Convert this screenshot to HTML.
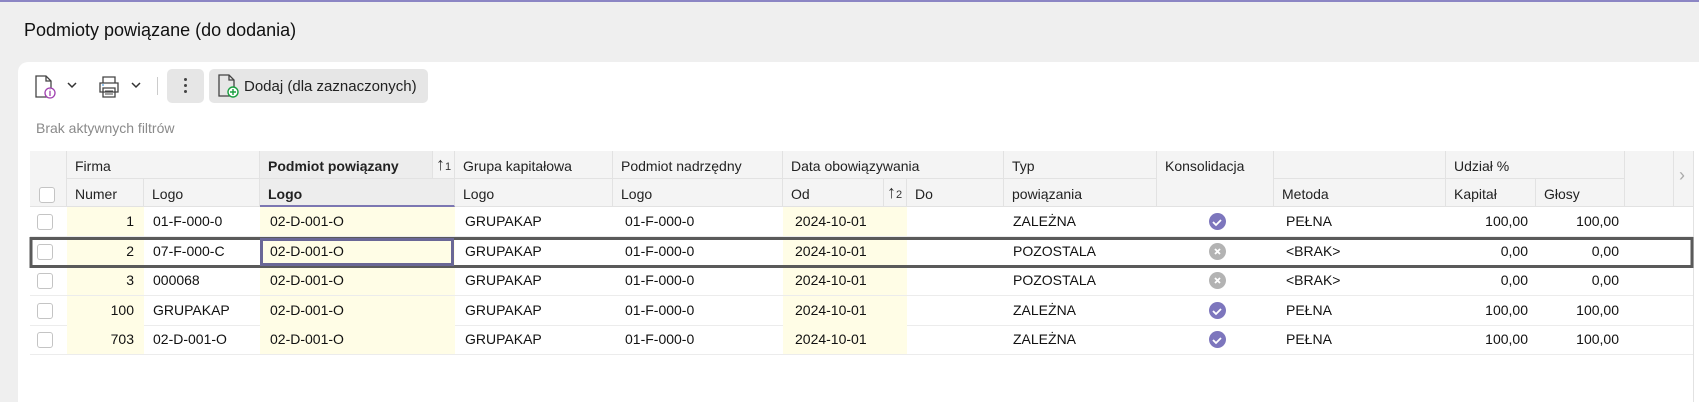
<!DOCTYPE html>
<html><head><meta charset="utf-8"><style>
*{box-sizing:border-box;margin:0;padding:0}
body{width:1699px;height:402px;overflow:hidden;background:#efefef;font-family:"Liberation Sans",Arial,sans-serif;color:#222;position:relative}
.a{position:absolute}
.topline{left:0;top:0;width:1699px;height:2px;background:#8c86c4}
.title{left:24px;top:20px;font-size:18px;color:#111}
.panel{left:18px;top:62px;width:1681px;height:340px;background:#fff;border-top-left-radius:10px}
.btn{background:#e6e6e6;border-radius:5px;top:69px;height:34px}
.filt{left:36px;top:120px;font-size:14px;color:#8a8a8a}
.hd{background:#f4f4f4;border-right:1px solid #e2e2e2;border-bottom:1px solid #e2e2e2;font-size:14px;color:#222;padding:7px 0 0 8px;height:28px}
.b{font-weight:bold}
.row{left:30px;width:1663px;height:30px;border-bottom:1px solid #ececec}
.c{position:absolute;top:0;height:29px;font-size:14px;line-height:29px;color:#111}
.y{background:#fffde6}
.cb{position:absolute;left:7px;top:7px;width:16px;height:16px;border:1px solid #c4c4c4;border-radius:3px;background:#fff}
.ok{position:absolute;left:52px;top:6px;width:17px;height:17px;border-radius:50%;background:#7d76bd}
.no{position:absolute;left:52px;top:6px;width:17px;height:17px;border-radius:50%;background:#b3b3b3}
.r{text-align:right}
.ar{font-size:18px;line-height:18px;padding:4px 0 0 3px;color:#333}
.ar span{font-size:11px}
</style></head><body>
<div class="a topline"></div>
<div class="a title">Podmioty powiązane (do dodania)</div>
<div class="a panel"></div>

<svg class="a" style="left:33px;top:74px" width="26" height="26" viewBox="0 0 26 26"><path d="M3 2h10l5 5v16H3z" fill="none" stroke="#444" stroke-width="1.3"/><path d="M13 2v5h5" fill="none" stroke="#444" stroke-width="1.3"/><circle cx="17" cy="19" r="5" fill="#fff" stroke="#a040b0" stroke-width="1.3"/><path d="M17 17v5M17 15.6v.6" stroke="#a040b0" stroke-width="1.3"/></svg>
<svg class="a" style="left:66px;top:80px" width="12" height="10"><path d="M2 3l4 4 4-4" fill="none" stroke="#333" stroke-width="1.5"/></svg>
<svg class="a" style="left:96px;top:74px" width="26" height="26" viewBox="0 0 26 26"><path d="M7 9V3h12v6M4 9h18v9H4zM7 14h12v9H7z" fill="#fff" stroke="#444" stroke-width="1.3"/><path d="M9 17h8M9 20h8" stroke="#444"/><path d="M6 11h2" stroke="#2a8ad8"/></svg>
<svg class="a" style="left:130px;top:80px" width="12" height="10"><path d="M2 3l4 4 4-4" fill="none" stroke="#333" stroke-width="1.5"/></svg>
<div class="a" style="left:157px;top:77px;width:1px;height:18px;background:#ccc"></div>
<div class="a btn" style="left:167px;width:37px"></div>
<div class="a" style="left:184px;top:78px;width:3px;height:3px;border-radius:50%;background:#444;box-shadow:0 6px 0 #444,0 12px 0 #444"></div>
<div class="a btn" style="left:209px;width:219px"></div>
<svg class="a" style="left:216px;top:73px" width="26" height="26" viewBox="0 0 26 26"><path d="M3 2h10l5 5v16H3z" fill="none" stroke="#444" stroke-width="1.3"/><path d="M13 2v5h5" fill="none" stroke="#444" stroke-width="1.3"/><circle cx="17" cy="19" r="5" fill="#fff" stroke="#1aa040" stroke-width="1.4"/><path d="M17 16v6M14 19h6" stroke="#1aa040" stroke-width="1.4"/></svg>
<div class="a" style="left:244px;top:78px;font-size:15px;color:#222">Dodaj (dla zaznaczonych)</div>
<div class="a filt">Brak aktywnych filtrów</div>

<div class="a" style="left:30px;top:151px;width:1664px;height:56px;background:#f4f4f4;border-top:1px solid #e2e2e2;border-left:1px solid #e2e2e2"></div>
<div class="a hd" style="left:30px;top:151px;width:37px;height:56px"></div>
<div class="cb a" style="left:39px;top:187px;position:absolute"></div>
<div class="a hd" style="left:67px;top:151px;width:193px">Firma</div>
<div class="a hd" style="left:67px;top:179px;width:77px">Numer</div>
<div class="a hd" style="left:144px;top:179px;width:116px">Logo</div>
<div class="a hd b" style="left:260px;top:151px;width:173px;background:#ededed">Podmiot powiązany</div>
<div class="a hd ar" style="left:433px;top:151px;width:22px">↑<span>1</span></div>
<div class="a hd b" style="left:260px;top:179px;width:195px;background:#ededed;border-bottom:2px solid #7c77b2">Logo</div>
<div class="a hd" style="left:455px;top:151px;width:158px">Grupa kapitałowa</div>
<div class="a hd" style="left:455px;top:179px;width:158px">Logo</div>
<div class="a hd" style="left:613px;top:151px;width:170px">Podmiot nadrzędny</div>
<div class="a hd" style="left:613px;top:179px;width:170px">Logo</div>
<div class="a hd" style="left:783px;top:151px;width:221px">Data obowiązywania</div>
<div class="a hd" style="left:783px;top:179px;width:101px">Od</div>
<div class="a hd ar" style="left:884px;top:179px;width:23px">↑<span>2</span></div>
<div class="a hd" style="left:907px;top:179px;width:97px">Do</div>
<div class="a hd" style="left:1004px;top:151px;width:153px">Typ</div>
<div class="a hd" style="left:1004px;top:179px;width:153px">powiązania</div>
<div class="a hd" style="left:1157px;top:151px;width:117px;height:56px">Konsolidacja</div>
<div class="a hd" style="left:1274px;top:151px;width:172px"></div>
<div class="a hd" style="left:1274px;top:179px;width:172px">Metoda</div>
<div class="a hd" style="left:1446px;top:151px;width:179px">Udział %</div>
<div class="a hd" style="left:1446px;top:179px;width:90px">Kapitał</div>
<div class="a hd" style="left:1536px;top:179px;width:89px">Głosy</div>
<div class="a hd" style="left:1625px;top:151px;width:49px;height:56px"></div>
<div class="a hd" style="left:1674px;top:151px;width:20px;height:56px;color:#aaa;font-size:18px;padding:14px 0 0 5px">›</div>
<div class="a" style="left:1693px;top:207px;width:1px;height:195px;background:#e2e2e2"></div>

<div class="a row" style="top:207px">
<div class="c" style="left:0;width:37px"><div class="cb"></div></div>
<div class="c y r" style="left:37px;width:77px;padding-right:10px">1</div>
<div class="c" style="left:123px">01-F-000-0</div>
<div class="c y" style="left:230px;width:195px;padding-left:10px">02-D-001-O</div>
<div class="c" style="left:435px">GRUPAKAP</div>
<div class="c" style="left:595px">01-F-000-0</div>
<div class="c y" style="left:753px;width:124px;padding-left:12px">2024-10-01</div>
<div class="c" style="left:983px">ZALEŻNA</div>
<div class="c" style="left:1127px;width:117px"><div class="ok"></div></div>
<div class="c" style="left:1256px">PEŁNA</div>
<div class="c r" style="left:1416px;width:82px">100,00</div>
<div class="c r" style="left:1506px;width:83px">100,00</div>
</div>
<div class="a row" style="top:237px">
<div class="c" style="left:0;width:37px"><div class="cb"></div></div>
<div class="c y r" style="left:37px;width:77px;padding-right:10px">2</div>
<div class="c" style="left:123px">07-F-000-C</div>
<div class="c y" style="left:230px;width:195px;padding-left:10px">02-D-001-O</div>
<div class="c" style="left:435px">GRUPAKAP</div>
<div class="c" style="left:595px">01-F-000-0</div>
<div class="c y" style="left:753px;width:124px;padding-left:12px">2024-10-01</div>
<div class="c" style="left:983px">POZOSTALA</div>
<div class="c" style="left:1127px;width:117px"><div class="no"></div></div>
<div class="c" style="left:1256px">&lt;BRAK&gt;</div>
<div class="c r" style="left:1416px;width:82px">0,00</div>
<div class="c r" style="left:1506px;width:83px">0,00</div>
</div>
<div class="a row" style="top:266px">
<div class="c" style="left:0;width:37px"><div class="cb"></div></div>
<div class="c y r" style="left:37px;width:77px;padding-right:10px">3</div>
<div class="c" style="left:123px">000068</div>
<div class="c y" style="left:230px;width:195px;padding-left:10px">02-D-001-O</div>
<div class="c" style="left:435px">GRUPAKAP</div>
<div class="c" style="left:595px">01-F-000-0</div>
<div class="c y" style="left:753px;width:124px;padding-left:12px">2024-10-01</div>
<div class="c" style="left:983px">POZOSTALA</div>
<div class="c" style="left:1127px;width:117px"><div class="no"></div></div>
<div class="c" style="left:1256px">&lt;BRAK&gt;</div>
<div class="c r" style="left:1416px;width:82px">0,00</div>
<div class="c r" style="left:1506px;width:83px">0,00</div>
</div>
<div class="a row" style="top:296px">
<div class="c" style="left:0;width:37px"><div class="cb"></div></div>
<div class="c y r" style="left:37px;width:77px;padding-right:10px">100</div>
<div class="c" style="left:123px">GRUPAKAP</div>
<div class="c y" style="left:230px;width:195px;padding-left:10px">02-D-001-O</div>
<div class="c" style="left:435px">GRUPAKAP</div>
<div class="c" style="left:595px">01-F-000-0</div>
<div class="c y" style="left:753px;width:124px;padding-left:12px">2024-10-01</div>
<div class="c" style="left:983px">ZALEŻNA</div>
<div class="c" style="left:1127px;width:117px"><div class="ok"></div></div>
<div class="c" style="left:1256px">PEŁNA</div>
<div class="c r" style="left:1416px;width:82px">100,00</div>
<div class="c r" style="left:1506px;width:83px">100,00</div>
</div>
<div class="a row" style="top:325px">
<div class="c" style="left:0;width:37px"><div class="cb"></div></div>
<div class="c y r" style="left:37px;width:77px;padding-right:10px">703</div>
<div class="c" style="left:123px">02-D-001-O</div>
<div class="c y" style="left:230px;width:195px;padding-left:10px">02-D-001-O</div>
<div class="c" style="left:435px">GRUPAKAP</div>
<div class="c" style="left:595px">01-F-000-0</div>
<div class="c y" style="left:753px;width:124px;padding-left:12px">2024-10-01</div>
<div class="c" style="left:983px">ZALEŻNA</div>
<div class="c" style="left:1127px;width:117px"><div class="ok"></div></div>
<div class="c" style="left:1256px">PEŁNA</div>
<div class="c r" style="left:1416px;width:82px">100,00</div>
<div class="c r" style="left:1506px;width:83px">100,00</div>
</div>
<svg class="a" style="left:0;top:0" width="1699" height="402">
<g stroke="#fff" stroke-width="1.8" fill="none">
<path d="M1213 222l3 3 5-5"/><path d="M1213 311l3 3 5-5"/><path d="M1213 340l3 3 5-5"/>
<path d="M1215 249l5 5M1220 249l-5 5"/><path d="M1215 278l5 5M1220 278l-5 5"/>
</g>
<rect x="31" y="238.5" width="1661" height="28" fill="none" stroke="#5a5a5a" stroke-width="3"/>
<rect x="261.5" y="239.5" width="191" height="25" fill="none" stroke="#6a6796" stroke-width="3"/>
</svg>
</body></html>
